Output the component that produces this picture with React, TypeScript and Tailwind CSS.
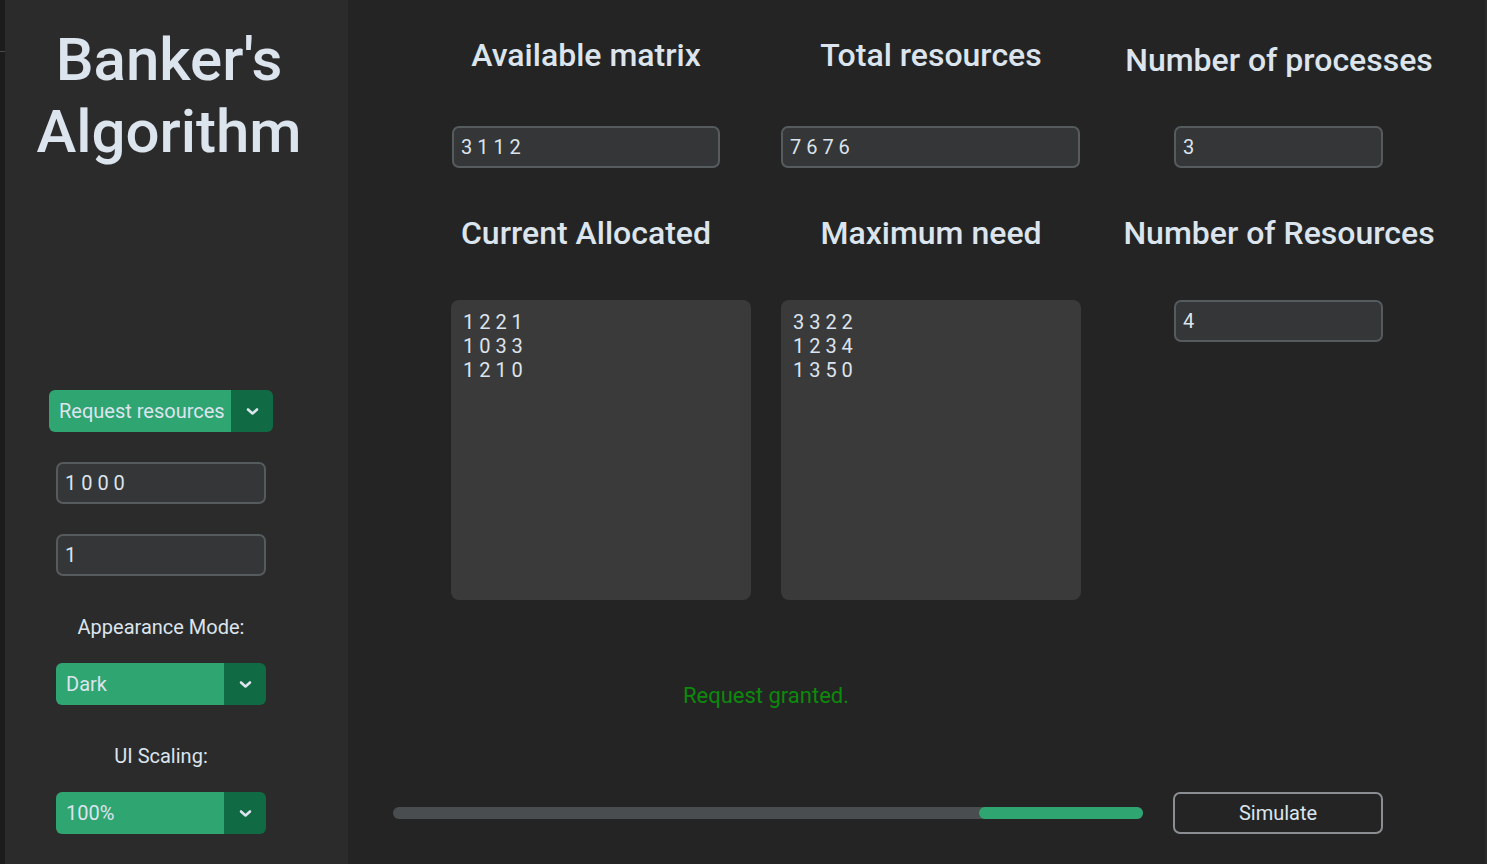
import React from 'react';

const font = { fontFamily: 'Roboto, "Noto Sans", sans-serif' };

function Chevron() {
  return (
    <svg width="13" height="9" viewBox="0 0 13 9" fill="none">
      <polyline points="2,2.5 6.5,6.5 11,2.5" stroke="#dce4ee" strokeWidth="2.6" strokeLinecap="round" strokeLinejoin="round" />
    </svg>
  );
}

function OptionMenu({ label, width }: { label: string; width: string }) {
  return (
    <div className={`${width} h-[42px] flex rounded-[6px] overflow-hidden`}>
      <div className="flex-1 bg-[#2fa572] flex items-center pl-[10px] text-[20px] text-[#dce4ee] whitespace-nowrap">
        {label}
      </div>
      <div className="w-[42px] bg-[#106a43] flex items-center justify-center">
        <Chevron />
      </div>
    </div>
  );
}

function Entry({ value, width }: { value: string; width: string }) {
  return (
    <div
      className={`${width} h-[42px] rounded-[7px] border-2 border-[#565b5e] bg-[#343638] flex items-center pl-[7px] text-[20px] text-[#dce4ee] whitespace-pre`}
    >
      {value}
    </div>
  );
}

function TextBox({ lines }: { lines: string[] }) {
  return (
    <div className="w-[300px] h-[300px] rounded-[8px] bg-[#3a3a3a] pt-[10px] pl-[12px] text-[20px] leading-[24px] text-[#dce4ee]">
      {lines.map((l) => (
        <div key={l} className="whitespace-pre">
          {l}
        </div>
      ))}
    </div>
  );
}

function Heading({ children, width }: { children: React.ReactNode; width: string }) {
  return (
    <div className={`${width} h-[40px] flex justify-center items-center text-[32px] font-medium text-[#dce4ee] whitespace-nowrap`}>
      {children}
    </div>
  );
}

export default function App() {
  return (
    <div className="w-[1487px] h-[864px] flex bg-[#242424] overflow-hidden" style={font}>
      {/* window edge */}
      <div className="w-[5px] bg-[#1c1c1c] pt-[51px]">
        <div className="h-px bg-[#4a4a4a]" />
      </div>

      {/* Sidebar */}
      <aside className="w-[343px] bg-[#2b2b2b] flex flex-col">
        <div className="w-[328px] pt-[24px] text-center text-[60px] leading-[72px] font-medium text-[#dce4ee]">
          <div>Banker's</div>
          <div>Algorithm</div>
        </div>

        <div className="ml-[44px] w-[224px] flex flex-col items-center mt-[222px]">
          <OptionMenu label="Request resources" width="w-[224px]" />
          <div className="mt-[30px]">
            <Entry value="1 0 0 0" width="w-[210px]" />
          </div>
          <div className="mt-[30px]">
            <Entry value="1" width="w-[210px]" />
          </div>
          <div className="mt-[39px] h-[24px] leading-[24px] text-[20px] text-[#dce4ee]">Appearance Mode:</div>
          <div className="mt-[24px]">
            <OptionMenu label="Dark" width="w-[210px]" />
          </div>
          <div className="mt-[39px] h-[24px] leading-[24px] text-[20px] text-[#dce4ee]">UI Scaling:</div>
          <div className="mt-[24px]">
            <OptionMenu label="100%" width="w-[210px]" />
          </div>
        </div>
      </aside>

      {/* Main */}
      <main className="flex-1 flex flex-col">
        <div className="pl-[103px] pt-[35px] grid grid-cols-[300px_300px_336px] gap-x-[30px]">
          <Heading width="w-[270px]">Available matrix</Heading>
          <Heading width="w-[300px]">Total resources</Heading>
          <div className="h-[40px] pt-[5px]">
            <Heading width="w-[336px]">Number of processes</Heading>
          </div>

          <div className="mt-[51px] pl-px">
            <Entry value="3 1 1 2" width="w-[268px]" />
          </div>
          <div className="mt-[51px]">
            <Entry value="7 6 7 6" width="w-[299px]" />
          </div>
          <div className="mt-[51px] pl-[63px]">
            <Entry value="3" width="w-[209px]" />
          </div>

          <div className="mt-[45px]">
            <Heading width="w-[270px]">Current Allocated</Heading>
          </div>
          <div className="mt-[45px]">
            <Heading width="w-[300px]">Maximum need</Heading>
          </div>
          <div className="mt-[45px]">
            <Heading width="w-[336px]">Number of Resources</Heading>
          </div>

          <div className="mt-[47px]">
            <TextBox lines={['1 2 2 1', '1 0 3 3', '1 2 1 0']} />
          </div>
          <div className="mt-[47px]">
            <TextBox lines={['3 3 2 2', '1 2 3 4', '1 3 5 0']} />
          </div>
          <div className="mt-[47px] pl-[63px]">
            <Entry value="4" width="w-[209px]" />
          </div>

          <div className="col-span-2 mt-[83px] h-[24px] flex justify-center items-center text-[22px] text-[#0c8a0c]">
            Request granted.
          </div>
        </div>

        <div className="mt-[85px] pl-[45px] flex items-center gap-[30px]">
          <div className="w-[750px] h-[12px] rounded-full bg-[#4a4d50] flex">
            <div className="w-[586px]" />
            <div className="flex-1 rounded-full bg-[#2fa572]" />
          </div>
          <div className="w-[210px] h-[42px] rounded-[7px] border-2 border-[#8a8e92] flex items-center justify-center text-[20px] text-[#dce4ee]">
            Simulate
          </div>
        </div>
      </main>

      <div className="w-[2px] bg-[#2a2a2a]" />
    </div>
  );
}
